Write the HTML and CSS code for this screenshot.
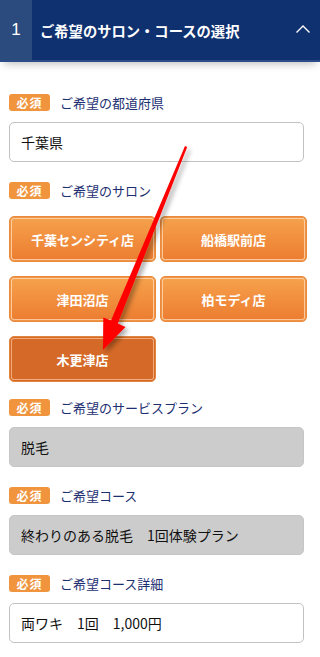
FILE: index.html
```html
<!DOCTYPE html>
<html lang="ja">
<head>
<meta charset="utf-8">
<link rel="stylesheet" href="styles.css">
</head>
<body>
<div class="page">
  <header class="head">
    <div class="num">1</div>
    <div class="title">ご希望のサロン・コースの選択</div>
    <svg class="chev" width="16" height="10" viewBox="0 0 16 10"><polyline points="1.5,8.5 8,2 14.5,8.5" fill="none" stroke="#fff" stroke-width="1.4"/></svg>
  </header>
  <main class="form">
    <div class="field">
      <div class="label"><span class="req">必須</span><span class="ltext">ご希望の都道府県</span></div>
      <div class="box">千葉県</div>
    </div>
    <div class="field">
      <div class="label"><span class="req">必須</span><span class="ltext">ご希望のサロン</span></div>
      <div class="btns">
        <div class="btn">千葉センシティ店</div>
        <div class="btn">船橋駅前店</div>
        <div class="btn">津田沼店</div>
        <div class="btn">柏モディ店</div>
        <div class="btn sel">木更津店</div>
      </div>
    </div>
    <div class="field">
      <div class="label"><span class="req">必須</span><span class="ltext">ご希望のサービスプラン</span></div>
      <div class="box gray">脱毛</div>
    </div>
    <div class="field">
      <div class="label"><span class="req">必須</span><span class="ltext">ご希望コース</span></div>
      <div class="box gray">終わりのある脱毛　1回体験プラン</div>
    </div>
    <div class="field">
      <div class="label"><span class="req">必須</span><span class="ltext">ご希望コース詳細</span></div>
      <div class="box">両ワキ　1回　1,000円</div>
    </div>
  </main>
  <svg class="arrow" width="320" height="657" viewBox="0 0 320 657">
    <defs>
      <filter id="sh" x="-20%" y="-20%" width="140%" height="140%">
        <feGaussianBlur in="SourceAlpha" stdDeviation="2.5"/>
        <feOffset dx="3" dy="3"/>
        <feComponentTransfer><feFuncA type="linear" slope="0.35"/></feComponentTransfer>
        <feMerge><feMergeNode/><feMergeNode in="SourceGraphic"/></feMerge>
      </filter>
    </defs>
    <polygon filter="url(#sh)" fill="#ff0000" points="185,146 187.2,147 117.8,323.6 125.5,327 103,350 103.3,317.5 111,320.5"/>
  </svg>
</div>
</body>
</html>
```
FILE: styles.css
```css
* { box-sizing: border-box; }
html, body { margin: 0; padding: 0; background: #fff; }
body {
  font-family: "Noto Sans CJK JP", "Noto Sans", sans-serif;
  width: 320px;
  height: 657px;
  overflow: hidden;
}
.page { position: relative; width: 320px; height: 657px; }
.head {
  display: flex;
  align-items: center;
  height: 62px;
  background: #0f3170;
  border-bottom: 2px solid #2a4d8a;
  box-shadow: 0 6px 8px -4px rgba(0,0,0,0.25);
}
.num {
  width: 32px;
  height: 100%;
  background: #2b4b7f;
  color: #fff;
  font-size: 17px;
  display: flex;
  align-items: center;
  justify-content: center;
  font-family: "Liberation Sans", sans-serif;
}
.title {
  flex: 1;
  color: #fff;
  font-weight: bold;
  font-size: 14.3px;
  padding-left: 8px;
}
.chev { margin-right: 9px; margin-top: -2px; }
.form {
  padding: 32px 16px 0 9px;
  display: flex;
  flex-direction: column;
  gap: 20px;
}
.field { display: flex; flex-direction: column; gap: 11px; }
.label { display: flex; align-items: center; height: 17px; }
.req {
  width: 41px;
  height: 17px;
  background: #f0953e;
  border-radius: 3px;
  color: #fff;
  font-size: 12px;
  font-weight: bold;
  display: flex;
  align-items: center;
  justify-content: center;
  letter-spacing: 1px;
}
.ltext {
  margin-left: 10px;
  color: #1d2f72;
  font-size: 13px;
  line-height: 17px;
}
.box {
  height: 40px;
  border: 1px solid #c2c2c2;
  border-radius: 5px;
  padding-left: 11px;
  display: flex;
  align-items: center;
  font-size: 14px;
  color: #111;
  background: #fff;
}
.box.gray { background: #cccccc; border-color: #c6c6c6; }
.btns {
  display: grid;
  grid-template-columns: 147px 147px;
  column-gap: 4px;
  row-gap: 14px;
  margin: 6px -3px -3px 0;
}
.btn {
  height: 46px;
  border: 1px solid #eb8a3c;
  border-radius: 5px;
  background: linear-gradient(#f6a24c, #ec7c30);
  box-shadow: inset 0 0 0 1px #ef9445, inset 0 0 0 2px rgba(255,222,190,0.75);
  color: #fff;
  font-weight: bold;
  font-size: 13px;
  display: flex;
  align-items: center;
  justify-content: center;
}
.btn.sel {
  background: #d56a28;
  border-color: #e0843e;
  box-shadow: inset 0 0 0 1px #d56a28, inset 0 0 0 2px rgba(255,200,160,0.7);
}
.arrow { position: absolute; left: 0; top: 0; pointer-events: none; }
```
